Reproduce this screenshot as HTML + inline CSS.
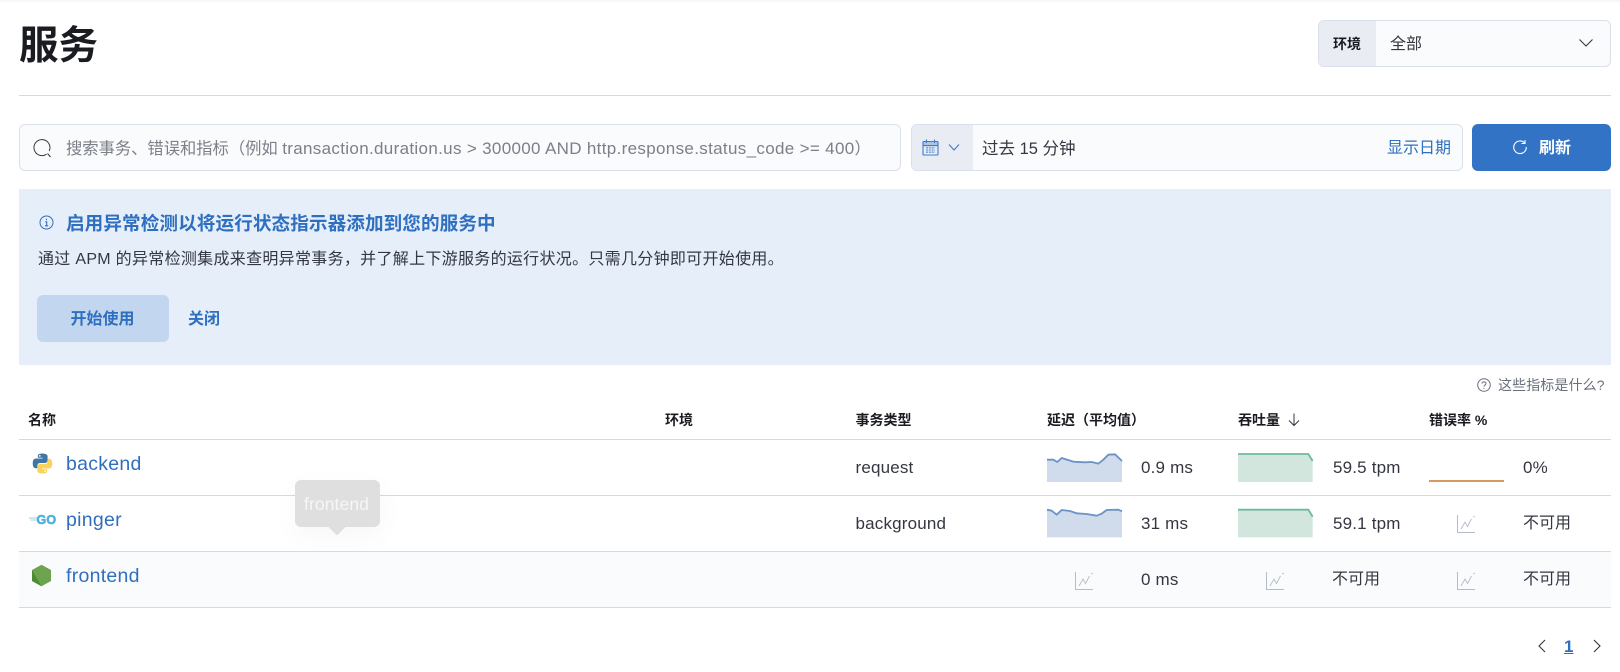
<!DOCTYPE html>
<html lang="zh-CN">
<head>
<meta charset="utf-8">
<title>服务</title>
<style>
*{box-sizing:border-box}
html,body{margin:0;padding:0;background:#fff}
body{position:relative;width:1620px;height:672px;overflow:hidden;font-family:"Liberation Sans","Noto Sans CJK SC",sans-serif;color:#343741}
.a{position:absolute}
.t{position:absolute;white-space:nowrap;line-height:24px;height:24px}
.th{font-size:14px;font-weight:700;color:#1a1c21;top:408px}
.v{font-size:17px;letter-spacing:.18px;color:#343741}
.c{font-size:16px;letter-spacing:0;color:#343741}
.l{font-size:19.5px;letter-spacing:.28px;color:#2f6fbf}
.line{position:absolute;left:19px;width:1592px;height:1px;background:#d3dae6}
.box{position:absolute;background:#fafbfd;border:1px solid #d9dfeb;border-radius:6px}
svg{position:absolute;display:block;overflow:visible}
</style>
</head>
<body>
<div class="a" style="left:0;top:0;width:1620px;height:2px;background:#f7f7f8"></div>

<div class="t" style="left:19px;top:25.500px;height:40px;line-height:40px;font-size:39.5px;font-weight:700;color:#1a1c21">服务</div>

<!-- environment select -->
<div class="box" style="left:1318px;top:20px;width:293px;height:47px;overflow:hidden">
  <div class="a" style="left:0;top:0;width:57px;height:45px;background:#e9edf3"></div>
</div>
<div class="t" style="left:1333px;top:32px;font-size:14px;font-weight:700;color:#1a1c21">环境</div>
<div class="t" style="left:1390px;top:32.500px;font-size:16px;color:#343741">全部</div>
<svg style="left:1578px;top:36px" width="16" height="14" viewBox="0 0 16 14"><path d="M1.500 3.500 8 10l6.500-6.500" fill="none" stroke="#343741" stroke-width="1.100"/></svg>

<div class="line" style="top:95px"></div>

<!-- search -->
<div class="box" style="left:19px;top:124px;width:882px;height:47px"></div>
<svg style="left:32px;top:137px" width="22" height="22" viewBox="0 0 22 22"><path d="M14.500 17.200A8 8 0 1 1 17.200 14" fill="none" stroke="#343741" stroke-width="1"/><path d="M15.500 16.500l3 3.500" fill="none" stroke="#343741" stroke-width="1"/></svg>
<div class="t" style="left:66px;top:136.500px;font-size:16.3px;color:#7b7f88">搜索事务、错误和指标（例如 <span style="font-size:17px;letter-spacing:.33px">transaction.duration.us &gt; 300000 AND http.response.status_code &gt;= 400</span>）</div>

<!-- date picker -->
<div class="box" style="left:911px;top:124px;width:552px;height:47px;overflow:hidden">
  <div class="a" style="left:0;top:0;width:61px;height:45px;background:#e9edf3"></div>
</div>
<svg style="left:922px;top:139px" width="17" height="17" viewBox="0 0 17 17"><path d="M1 2.500h15v5H1z" fill="#a9c5e8"/><path d="M1.500 2.500h14a1 1 0 0 1 .5.500v12.500a1 1 0 0 1-.5.500h-14a1 1 0 0 1-.5-.5V3a1 1 0 0 1 .5-.5zM1 6.500h15M4.500 .5v3.500M12.500 .5v3.500" fill="none" stroke="#3f7cc6" stroke-width="1.100"/><path d="M4 8.800h9M4 11h9M4 13.200h9" fill="none" stroke="#6b9ad6" stroke-width="1.300" stroke-dasharray="2 .8"/></svg>
<svg style="left:948px;top:143px" width="12" height="9" viewBox="0 0 12 9"><path d="M1 1.500 6 7l5-5.500" fill="none" stroke="#3f7cc6" stroke-width="1.100"/></svg>
<div class="t" style="left:982px;top:136.500px;font-size:16.500px;color:#343741">过去 15 分钟</div>
<div class="t" style="left:1387px;top:136.500px;font-size:16px;color:#2f6fbf">显示日期</div>

<!-- refresh -->
<div class="a" style="left:1472px;top:124px;width:139px;height:47px;background:#3273c6;border-radius:6px"></div>
<svg style="left:1512px;top:139px" width="16" height="16" viewBox="0 0 16 16"><path d="M12.800 4.200A6.300 6.300 0 1 0 14.300 8" fill="none" stroke="#fff" stroke-width="1.100"/><path d="M13 1v3.500H9.500" fill="none" stroke="#fff" stroke-width="1.100"/></svg>
<div class="t" style="left:1539px;top:136.500px;font-size:16px;font-weight:700;color:#fff">刷新</div>

<!-- banner -->
<div class="a" style="left:19px;top:189px;width:1592px;height:176px;background:#e6eff9"></div>
<svg style="left:39px;top:215px" width="15" height="15" viewBox="0 0 15 15"><circle cx="7.500" cy="7.500" r="6.500" fill="none" stroke="#2f6fbf" stroke-width="1"/><path d="M6.300 6.800h1.400v4M6 10.800h3.200M7.500 3.800v1.400" fill="none" stroke="#2f6fbf" stroke-width="1.100"/></svg>
<div class="t" style="left:66px;top:211.500px;font-size:18.600px;letter-spacing:.09px;font-weight:700;color:#2f6fbf">启用异常检测以将运行状态指示器添加到您的服务中</div>
<div class="t" style="left:38px;top:247.500px;font-size:16px;letter-spacing:.3px;color:#343741">通过 APM 的异常检测集成来查明异常事务，并了解上下游服务的运行状况。只需几分钟即可开始使用。</div>
<div class="a" style="left:37px;top:295px;width:132px;height:47px;background:#c2d7ef;border-radius:6px"></div>
<div class="t" style="left:70.500px;top:307.500px;font-size:16px;font-weight:700;color:#2f6fbf">开始使用</div>
<div class="t" style="left:188px;top:307.500px;font-size:16px;font-weight:700;color:#2f6fbf">关闭</div>

<!-- metric help -->
<svg style="left:1477px;top:378px" width="14" height="14" viewBox="0 0 14 14"><circle cx="7" cy="7" r="6.300" fill="none" stroke="#69707d" stroke-width="1"/><path d="M5 5.500C5 3.300 9 3.300 9 5.500c0 1.500-2 1.500-2 3.200M7 10v1" fill="none" stroke="#69707d" stroke-width="1"/></svg>
<div class="t" style="left:1498px;top:373px;font-size:14px;letter-spacing:.1px;color:#69707d">这些指标是什么?</div>

<!-- table header -->
<div class="t th" style="left:28px">名称</div>
<div class="t th" style="left:665px">环境</div>
<div class="t th" style="left:855.500px">事务类型</div>
<div class="t th" style="left:1047px">延迟（平均值）</div>
<div class="t th" style="left:1238px">吞吐量</div>
<svg style="left:1287px;top:412px" width="14" height="15" viewBox="0 0 14 15"><path d="M7 1.500v12M2 8.500l5 5 5-5" fill="none" stroke="#343741" stroke-width="1"/></svg>
<div class="t th" style="left:1429px">错误率 %</div>

<!-- rows -->
<div class="a" style="left:19px;top:552px;width:1592px;height:56px;background:#fafbfd"></div>
<div class="line" style="top:439px"></div>
<div class="line" style="top:495px"></div>
<div class="line" style="top:551px"></div>
<div class="line" style="top:607px"></div>

<!-- row 1 -->
<svg style="left:31px;top:452px" width="23" height="23" viewBox="0 0 24 24"><path fill="#3f76a6" d="M11.900 1.500c-5 0-4.700 2.200-4.700 2.200v2.300h4.900v.8H5.300S1.800 6.400 1.800 11.800s3 5.200 3 5.200h1.800v-2.500s-.1-3 3-3h4.900s2.800 0 2.800-2.700V4.300s.4-2.800-6.400-2.800zM9.200 3.100a.9.9 0 1 1 0 1.800.9.9 0 0 1 0-1.800z"/><path fill="#fbd35c" d="M12.100 22.500c5 0 4.700-2.200 4.700-2.200V18h-4.900v-.8h6.800s3.500.4 3.500-5-3-5.200-3-5.200h-1.800v2.500s.1 3-3 3H9.500s-2.800 0-2.800 2.700v4.500s-.4 2.800 5.400 2.800zm2.700-1.600a.9.9 0 1 1 0-1.800.9.9 0 0 1 0 1.800z"/></svg>
<div class="t l" style="left:66px;top:451.500px">backend</div>
<div class="t v" style="left:855.500px;top:456px">request</div>
<svg style="left:1047px;top:451.670px" width="75" height="30" viewBox="51 155 225 90"><path fill="#d0dcec" d="M51 178 70 178 82 185 95 173 130 184 165 186 185 185 205 190 220 178 235 163 255 162 276 182V245H51Z"/><path fill="none" stroke="#6a93c6" stroke-width="5.500" stroke-linejoin="round" d="M51 178 70 178 82 185 95 173 130 184 165 186 185 185 205 190 220 178 235 163 255 162 276 182"/></svg>
<div class="t v" style="left:1141px;top:456px">0.9 ms</div>
<svg style="left:1238px;top:451.670px" width="75" height="30" viewBox="624 155 225 90"><path fill="#d3e6de" d="M624 161H835L848 182V245H624Z"/><path fill="none" stroke="#6dbb9e" stroke-width="5.500" stroke-linejoin="round" d="M624 161H835L848 182"/></svg>
<div class="t v" style="left:1333px;top:456px">59.5 tpm</div>
<div class="a" style="left:1429px;top:480px;width:75px;height:1.500px;background:#d69a5f"></div>
<div class="t v" style="left:1523px;top:456px">0%</div>

<!-- row 2 -->
<svg style="left:28px;top:514px" width="10" height="10" viewBox="0 0 10 10">
  <path d="M1 4h8M2.500 6h6" stroke="#a9dcee" stroke-width="1.200" fill="none"/>
</svg>
<div class="t" style="left:36.500px;top:507.500px;font-size:12.500px;font-weight:700;color:#4fb2d9;letter-spacing:.1px;-webkit-text-stroke:.6px #4fb2d9">GO</div>
<div class="t l" style="left:66px;top:507.500px">pinger</div>
<div class="t v" style="left:855.500px;top:512px">background</div>
<svg style="left:1047px;top:508.330px" width="75" height="30" viewBox="51 325 225 90"><path fill="#d0dcec" d="M51 330 65 333 80 345 95 331 120 334 140 341 170 343 200 348 215 342 230 331 265 330 276 335V413H51Z"/><path fill="none" stroke="#6a93c6" stroke-width="5.500" stroke-linejoin="round" d="M51 330 65 333 80 345 95 331 120 334 140 341 170 343 200 348 215 342 230 331 265 330 276 335"/></svg>
<div class="t v" style="left:1141px;top:512px">31 ms</div>
<svg style="left:1238px;top:508.330px" width="75" height="30" viewBox="624 325 225 90"><path fill="#d3e6de" d="M624 330H835L848 351V413H624Z"/><path fill="none" stroke="#6dbb9e" stroke-width="5.500" stroke-linejoin="round" d="M624 330H835L848 351"/></svg>
<div class="t v" style="left:1333px;top:512px">59.1 tpm</div>
<svg style="left:1457px;top:515px" width="18" height="18" viewBox="0 0 18 18"><path d="M.5 0v17.500H18" fill="none" stroke="#b4bccb" stroke-width="1"/><path d="M4 14 8 7l2.500 4.500L14.500 4" fill="none" stroke="#b4bccb" stroke-width=".9"/><circle cx="17" cy="1.500" r=".8" fill="#b4bccb"/></svg>
<div class="t c" style="left:1523px;top:512px">不可用</div>

<!-- row 3 -->
<svg style="left:31px;top:564px" width="21" height="23" viewBox="0 0 21 23"><path fill="#6da34d" d="M10.500.7 20 6v11l-9.500 5.300L1 17V6Z"/><path fill="#4f8a38" d="M1 6l9.500 16.300L1 17Z"/></svg>
<div class="t l" style="left:66px;top:563.500px">frontend</div>
<svg style="left:1075px;top:572px" width="18" height="18" viewBox="0 0 18 18"><path d="M.5 0v17.500H18" fill="none" stroke="#b4bccb" stroke-width="1"/><path d="M4 14 8 7l2.500 4.500L14.500 4" fill="none" stroke="#b4bccb" stroke-width=".9"/><circle cx="17" cy="1.500" r=".8" fill="#b4bccb"/></svg>
<div class="t v" style="left:1141px;top:568px">0 ms</div>
<svg style="left:1266px;top:572px" width="18" height="18" viewBox="0 0 18 18"><path d="M.5 0v17.500H18" fill="none" stroke="#b4bccb" stroke-width="1"/><path d="M4 14 8 7l2.500 4.500L14.500 4" fill="none" stroke="#b4bccb" stroke-width=".9"/><circle cx="17" cy="1.500" r=".8" fill="#b4bccb"/></svg>
<div class="t c" style="left:1332px;top:568px">不可用</div>
<svg style="left:1457px;top:572px" width="18" height="18" viewBox="0 0 18 18"><path d="M.5 0v17.500H18" fill="none" stroke="#b4bccb" stroke-width="1"/><path d="M4 14 8 7l2.500 4.500L14.500 4" fill="none" stroke="#b4bccb" stroke-width=".9"/><circle cx="17" cy="1.500" r=".8" fill="#b4bccb"/></svg>
<div class="t c" style="left:1523px;top:568px">不可用</div>

<!-- tooltip -->
<div class="a" style="left:295px;top:480px;width:85px;height:47px;background:#dfdfe0;border-radius:6px;box-shadow:0 8px 24px rgba(80,90,110,.05)"></div>
<div class="a" style="left:331px;top:521px;width:12px;height:12px;background:#dfdfe0;transform:rotate(45deg);border-radius:1px"></div>
<div class="t" style="left:304px;top:492px;font-size:17.500px;letter-spacing:.1px;color:#f6f6f7">frontend</div>

<!-- pagination -->
<svg style="left:1536px;top:638px" width="12" height="16" viewBox="0 0 12 16"><path d="M9 2 3 8l6 6" fill="none" stroke="#343741" stroke-width="1.100"/></svg>
<div class="t" style="left:1564px;top:635px;font-size:17px;font-weight:700;color:#2f6fbf;text-decoration:underline">1</div>
<svg style="left:1591px;top:638px" width="12" height="16" viewBox="0 0 12 16"><path d="M3 2l6 6-6 6" fill="none" stroke="#343741" stroke-width="1.100"/></svg>
</body>
</html>
